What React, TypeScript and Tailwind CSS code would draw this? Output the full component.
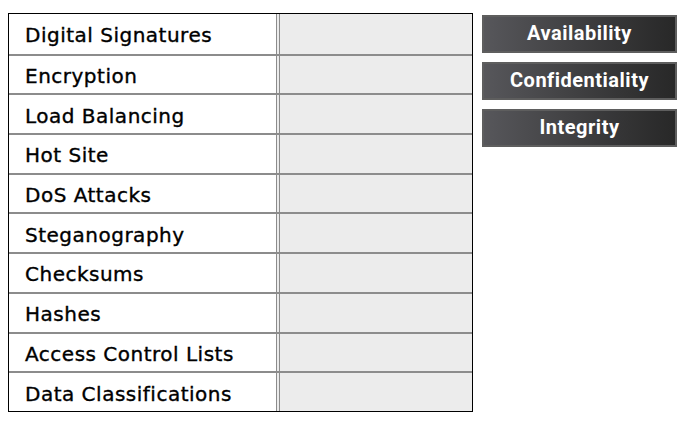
const rows = [
  "Digital Signatures",
  "Encryption",
  "Load Balancing",
  "Hot Site",
  "DoS Attacks",
  "Steganography",
  "Checksums",
  "Hashes",
  "Access Control Lists",
  "Data Classifications",
];

const tags = ["Availability", "Confidentiality", "Integrity"];

export default function App() {
  return (
    <div className="w-[686px] h-[423px] bg-white flex items-start pt-[13px] pl-[8px] font-['DejaVu_Sans',sans-serif]">
      <div className="w-[465px] border-[1.5px] border-black flex flex-col">
        {rows.map((r, i) => (
          <div
            key={r}
            className={`flex h-[39.7px] ${i > 0 ? "border-t-2 border-[#8c8c8c]" : ""}`}
          >
            <div className="w-[267px] flex items-center pl-[16px] pt-[3px] text-[20px] text-black tracking-[0.5px] [-webkit-text-stroke:0.35px_black]">
              {r}
            </div>
            <div className="flex-1 bg-[#ececec] border-l-[4px] border-double border-[#8c8c8c]" />
          </div>
        ))}
      </div>
      <div className="ml-[9px] mt-[2px] flex flex-col gap-[9px]">
        {tags.map((t) => (
          <div
            key={t}
            className="w-[195px] h-[38px] border-2 border-[#5e5e5e] bg-gradient-to-r from-[#57575b] to-[#282828] flex items-center justify-center text-white text-[20px] font-bold font-['Roboto',sans-serif] tracking-[0.5px] pb-[3px]"
          >
            {t}
          </div>
        ))}
      </div>
    </div>
  );
}
